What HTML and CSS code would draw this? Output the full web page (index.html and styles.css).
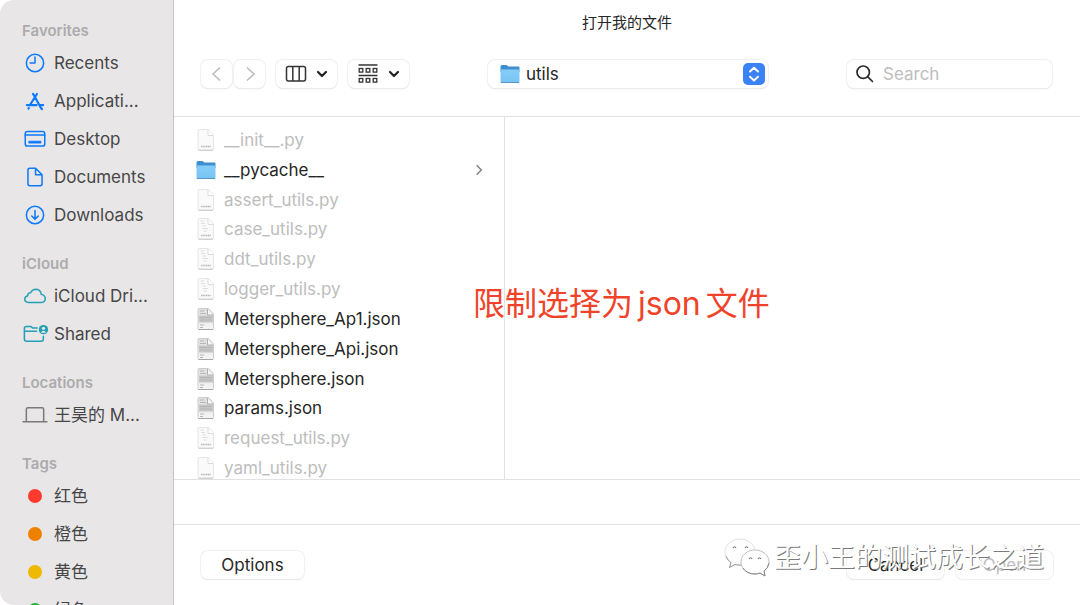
FILE: index.html
```html
<!DOCTYPE html>
<html lang="zh-CN">
<head>
<meta charset="utf-8">
<meta name="viewport" content="width=device-width, initial-scale=1">
<title>打开我的文件</title>
<link rel="stylesheet" href="styles.css">
</head>
<body>
<svg class="defs" aria-hidden="true">
  <linearGradient id="folderFill" x1="0" y1="0" x2="0" y2="1"><stop offset="0" stop-color="#86cdf8"/><stop offset="1" stop-color="#78c4f4"/></linearGradient>
  <linearGradient id="jsonFill" x1="0" y1="0" x2="0" y2="1"><stop offset="0" stop-color="#dedede"/><stop offset="1" stop-color="#f6f6f6"/></linearGradient>
  <symbol id="folder" viewBox="0 0 20 20">
    <path d="M0.5 2.5Q0.5 1 2 1H6.5L8.5 2.500H18.500Q19.500 2.500 19.500 3.500V8H.5Z" fill="#3f8fd0"/>
    <path d="M.5 5.500H19.500V17.500Q19.500 18.500 18.500 18.500H1.500Q.5 18.500 .5 17.500Z" fill="url(#folderFill)"/>
    <path d="M.8 18.500H19.200" stroke="#5599c4" stroke-width="1"/>
  </symbol>
  <symbol id="py" viewBox="0 0 18 22">
    <path d="M1 1.500Q1 .5 2 .5H11.500L16.500 6V20Q16.500 21 15.500 21H2Q1 21 1 20Z" fill="#fafafa" stroke="#e6e6e6"/>
    <path d="M11 .8V6.500H16.500" fill="#fff" stroke="#dcdcdc"/>
    <path d="M1.500 21.300H16" stroke="#c8c8c8"/>
    <path d="M4 17.500H14" stroke="#b4b4b4" stroke-width="1.300" stroke-dasharray="1.200 .5"/>
  </symbol>
  <symbol id="pycode" viewBox="0 0 18 22">
    <use href="#py"/>
    <path d="M3.500 3H7M4 5.500H8M5.500 8H9M5.500 10.500H11M6.500 13H10" stroke="#dedede"/>
  </symbol>
  <symbol id="json" viewBox="0 0 18 22">
    <path d="M1 1.500Q1 .5 2 .5H11.500L16.500 6V20.500Q16.500 21.500 15.500 21.500H2Q1 21.500 1 20.500Z" fill="url(#jsonFill)" stroke="#cdcdcd"/>
    <path d="M2 7.500H16V14.500H2Z" fill="#c6c6c6"/>
    <path d="M3 3H7M3 5.500H9M3 9.500H15M3 12H15M3 17H7M3 19.500H6" stroke="#b6b6b6"/>
    <path d="M10.500 1V7H16" fill="#f7f7f7" stroke="#b0b0b0"/>
    <path d="M1.500 21.500H16" stroke="#a6a6a6"/>
  </symbol>
  <symbol id="chev" viewBox="0 0 12 12"><path d="M2 4L6 8L10 4" fill="none" stroke="#222" stroke-width="2.200" stroke-linecap="round" stroke-linejoin="round"/></symbol>
</svg>

<div class="dialog">
  <nav class="sidebar">
    <section>
      <h2>Favorites</h2>
      <a href="#recents"><svg class="blue" viewBox="0 0 24 24"><circle cx="12" cy="12" r="8"/><path d="M12 6.500V12H7.500"/></svg><span>Recents</span></a>
      <a href="#applications"><svg class="blue thick" viewBox="0 0 24 24"><path d="M10.200 5.500L11.800 8L17.500 18.500L18.500 19.500M13.800 5.500L7.500 15.500M4.500 15.800H13.500M17 15.800H19.500M6.300 18.500L6 19"/></svg><span>Applicati...</span></a>
      <a href="#desktop"><svg class="blue" viewBox="0 0 24 24"><rect x="3" y="5" width="18" height="13.500" rx="2"/><path d="M3 8.300H21"/><rect x="6.500" y="14" width="11" height="1.800" fill="#0a7aff" stroke-width=".6"/></svg><span>Desktop</span></a>
      <a href="#documents"><svg class="blue" viewBox="0 0 24 24"><path d="M12.500 4H7.200Q5.500 4 5.500 5.700V18.300Q5.500 20 7.200 20H16.800Q18.500 20 18.500 18.300V10ZM12.500 4V10H18.500"/></svg><span>Documents</span></a>
      <a href="#downloads"><svg class="blue" viewBox="0 0 24 24"><circle cx="12" cy="12" r="8"/><path d="M12 7.800V15.800M9 13L12 16L15 13"/></svg><span>Downloads</span></a>
    </section>
    <section>
      <h2>iCloud</h2>
      <a href="#drive"><svg class="teal" viewBox="0 0 24 24"><path d="M6 18Q2.500 17.800 2.500 14.800Q2.700 12.300 5.300 11.700Q5.300 8.900 8 9Q9.500 5.800 13 5.800Q17 6 17.800 10.500Q21.500 11.300 21.500 14.500Q21.300 17.700 18 18Z"/></svg><span>iCloud Dri...</span></a>
      <a href="#shared"><svg class="teal" viewBox="0 0 24 24"><path d="M14 6.500H10L8 5H4Q2.200 5 2.200 6.700V16.500Q2.200 18.600 4.300 18.600H17.500Q19.700 18.600 19.700 16.500V14M2.200 9.500H13.500"/><circle cx="19.800" cy="8" r="4.300" fill="#22a0b6" stroke="none"/><circle cx="19.800" cy="6.700" r="1.500" fill="#e8e6e7" stroke="none"/><path d="M17.300 10.800Q19.800 7.300 22.300 10.800" fill="#e8e6e7" stroke="none"/></svg><span>Shared</span></a>
    </section>
    <section>
      <h2>Locations</h2>
      <a href="#mac"><svg class="gray" viewBox="0 0 24 24"><path d="M4 17.500V6.700Q4 5.200 5.500 5.200H18.500Q20 5.200 20 6.700V17.500M1 18.200H23"/></svg><span>王昊的 M...</span></a>
    </section>
    <section>
      <h2>Tags</h2>
      <a href="#red"><i class="dot red"></i><span>红色</span></a>
      <a href="#orange"><i class="dot orange"></i><span>橙色</span></a>
      <a href="#yellow"><i class="dot yellow"></i><span>黄色</span></a>
      <a href="#green"><i class="dot green"></i><span>绿色</span></a>
    </section>
  </nav>

  <main class="main">
    <h1>打开我的文件</h1>
    <div class="toolbar">
      <div class="tools">
        <div class="nav-pair">
          <button class="ctl nav" aria-label="Back" disabled><svg width="16" height="18" viewBox="0 0 16 18"><path d="M11 2.500L4 9L11 15.500"/></svg></button>
          <button class="ctl nav" aria-label="Forward" disabled><svg width="16" height="18" viewBox="0 0 16 18"><path d="M5 2.500L12 9L5 15.500"/></svg></button>
        </div>
        <button class="ctl view" aria-label="Column view"><svg width="22" height="20" viewBox="0 0 22 20" fill="none" stroke="#333" stroke-width="1.500"><rect x="1.500" y="2.500" width="19" height="14.500" rx="2"/><path d="M7.800 2.500V17M14.200 2.500V17"/></svg><svg width="12" height="12"><use href="#chev"/></svg></button>
        <button class="ctl view" aria-label="Group items"><svg width="22" height="20" viewBox="0 0 22 20" fill="none" stroke="#333" stroke-width="1.300"><path d="M1.500 1H20.500M1.500 11.500H20.500"/><rect x="2.200" y="4.500" width="3.600" height="3.600"/><rect x="9.200" y="4.500" width="3.600" height="3.600"/><rect x="16.200" y="4.500" width="3.600" height="3.600"/><rect x="2.200" y="14.500" width="3.600" height="3.600"/><rect x="9.200" y="14.500" width="3.600" height="3.600"/><rect x="16.200" y="14.500" width="3.600" height="3.600"/></svg><svg width="12" height="12"><use href="#chev"/></svg></button>
      </div>
      <div class="picker">
        <select class="ctl" aria-label="Folder"><option>utils</option></select>
        <svg class="picker-folder" width="20" height="20"><use href="#folder"/></svg>
        <svg class="picker-arrows" width="22" height="22" viewBox="0 0 22 22"><rect width="22" height="22" rx="5" fill="#3b82f6"/><path d="M7 8.500L11 4.800L15 8.500M7 13.800L11 17.500L15 13.800" fill="none" stroke="#fff" stroke-width="2" stroke-linecap="round" stroke-linejoin="round"/></svg>
      </div>
      <div class="search">
        <input class="ctl" type="search" placeholder="Search" aria-label="Search">
        <svg width="20" height="20" viewBox="0 0 20 20" fill="none" stroke="#2c2c2c" stroke-width="1.700" stroke-linecap="round"><circle cx="8.200" cy="8.200" r="6.200"/><path d="M12.800 12.800L17.500 17.500"/></svg>
      </div>
    </div>

    <div class="columns">
      <div class="column">
        <ul class="files">
          <li><button disabled><svg><use href="#py"/></svg>__init__.py</button></li>
          <li><button><svg><use href="#folder"/></svg>__pycache__<svg class="more" viewBox="0 0 12 12"><path d="M4 2L8 6L4 10" fill="none" stroke="#858585" stroke-width="1.300"/></svg></button></li>
          <li><button disabled><svg><use href="#py"/></svg>assert_utils.py</button></li>
          <li><button disabled><svg><use href="#pycode"/></svg>case_utils.py</button></li>
          <li><button disabled><svg><use href="#pycode"/></svg>ddt_utils.py</button></li>
          <li><button disabled><svg><use href="#pycode"/></svg>logger_utils.py</button></li>
          <li><button><svg><use href="#json"/></svg>Metersphere_Ap1.json</button></li>
          <li><button><svg><use href="#json"/></svg>Metersphere_Api.json</button></li>
          <li><button><svg><use href="#json"/></svg>Metersphere.json</button></li>
          <li><button><svg><use href="#json"/></svg>params.json</button></li>
          <li><button disabled><svg><use href="#pycode"/></svg>request_utils.py</button></li>
          <li><button disabled><svg><use href="#py"/></svg>yaml_utils.py</button></li>
        </ul>
      </div>
      <div class="preview"></div>
      <p class="note"><span>限制选择为</span><span>json</span><span>文件</span></p>
    </div>
    <div class="strip"></div>
    <footer class="footer">
      <button class="ctl options">Options</button>
      <div class="actions">
        <button class="ctl">Cancel</button>
        <button class="ctl" disabled>Open</button>
      </div>
      <div class="watermark">
        <svg width="46" height="40" viewBox="0 0 46 40" fill="#fff" stroke-width=".9">
          <path d="M16 1C7.500 1 1 6.800 1 14C1 18.300 3.300 22 7 24.500L5.500 29.500L11 26.500Q18 28 22 26C31 22 32 14 31 11C29 5 23 1 16 1Z" stroke="#dedede"/>
          <path d="M2 18Q3.500 22.500 7 24.500L5.500 29.500L11 26.500Q14 27.500 17 27" fill="none" stroke="#909090"/>
          <path d="M31 12C23 12 17 17.500 17 24C17 31 23 36 31 36Q34 36 36 35L41 38L40 33C43 31 45 28 45 24C45 17.500 39 12 31 12Z" stroke="#b8b8b8"/>
          <path d="M19 30Q23 36 31 36Q34 36 36 35L41 38L40 33Q44 30 45 25" fill="none" stroke="#808080"/>
          <g fill="none" stroke="#777" stroke-width="1.200"><path d="M9 10Q10.500 7.500 12 10M21 10Q22.500 7.500 24 10M25 21Q26.500 18.500 28 21M34 21Q35.500 18.500 37 21"/></g>
        </svg>
        <span>歪小王的测试成长之道</span>
      </div>
    </footer>
  </main>
</div>
</body>
</html>
```
FILE: styles.css
```css
* { box-sizing: border-box; }
body {
  margin: 0;
  background: #fff;
  color: #262626;
  font: 17px/24px Inter, "Noto Sans CJK SC", sans-serif;
}
button, input, select { font: inherit; color: inherit; }
h1, h2, p, ul { margin: 0; padding: 0; }
.defs { position: absolute; width: 0; height: 0; }

.dialog { display: flex; height: 100vh; overflow: hidden; }

.sidebar {
  flex: 0 0 174px;
  display: flex;
  flex-direction: column;
  gap: 17px;
  padding: 18px 22px 0;
  overflow: hidden;
  background: #e8e6e7;
  border-right: 1px solid #c4c3c4;
  border-radius: 14px 0 0 14px;
}
.sidebar h2 { font-size: 15px; font-weight: 600; line-height: 26px; color: #adabac; }
.sidebar a {
  display: flex;
  align-items: center;
  gap: 6px;
  height: 38px;
  color: #474647;
  text-decoration: none;
  white-space: nowrap;
}
.sidebar svg { flex: none; width: 26px; height: 26px; fill: none; stroke-width: 1.400; stroke-linejoin: round; stroke-linecap: round; overflow: visible; }
.sidebar .blue { stroke: #0a7aff; }
.sidebar .thick { stroke-width: 2; }
.sidebar .teal { stroke: #22a0b6; }
.sidebar .gray { stroke: #7b797a; }
.dot { flex: none; width: 14px; height: 14px; margin: 0 6px; border-radius: 50%; }
.red { background: #ff3b30; }
.orange { background: #ee8200; }
.yellow { background: #eeb900; }
.green { background: #1fb92f; }

.main { flex: 1; min-width: 0; display: flex; flex-direction: column; }
.main h1 { padding-top: 11px; font-size: 15px; font-weight: 400; line-height: 24px; text-align: center; }
.ctl {
  height: 28px;
  padding: 0;
  border: 0;
  border-radius: 7px;
  background: #fff;
  box-shadow: 0 0 1px 1px #f0f0f0, 0 1px 1px 0 #c8c8c8;
}
.toolbar {
  display: flex;
  justify-content: space-between;
  align-items: center;
  padding: 25px 28px 28px 27px;
  border-bottom: 1px solid #e2e2e2;
}
.tools { display: flex; gap: 11px; }
.nav-pair { display: flex; gap: 2px; }
.nav { width: 31px; display: grid; place-items: center; }
.nav svg { fill: none; stroke: #b9b9b9; stroke-width: 1.500; }
.view { width: 61px; display: flex; align-items: center; justify-content: center; gap: 9px; }
.picker { position: relative; width: 280px; }
.picker select { width: 100%; padding: 0 38px; appearance: none; }
.picker-folder { position: absolute; left: 12px; top: 4px; pointer-events: none; }
.picker-arrows { position: absolute; right: 3px; top: 3px; pointer-events: none; }
.search { position: relative; width: 205px; }
.search input { width: 100%; padding: 0 8px 0 36px; appearance: none; outline-offset: 2px; }
.search input::placeholder { color: #bdbdbd; }
.search svg { position: absolute; left: 8px; top: 4px; }

.columns { position: relative; flex: 1; min-height: 0; display: flex; overflow: hidden; }
.column { flex: 0 0 331px; display: flex; border-right: 1px solid #e2e2e2; }
.preview { flex: 1; }
.files {
  flex: 1;
  display: grid;
  grid-auto-rows: 1fr;
  margin-bottom: -4px;
  padding: 8px 18px 0 22px;
  list-style: none;
}
.files li { display: flex; min-height: 0; }
.files button {
  flex: 1;
  display: flex;
  align-items: center;
  gap: 8px;
  padding: 0;
  border: 0;
  background: none;
  text-align: left;
}
.files button:disabled { color: #bdbdbd; }
.files svg { flex: none; width: 20px; height: 22px; }
.files .more { width: 14px; height: 14px; margin-left: auto; }
.note {
  position: absolute;
  left: 299px;
  top: 163px;
  display: flex;
  gap: 5px;
  font-size: 32px;
  line-height: 48px;
  color: #f0432a;
  white-space: nowrap;
}
.strip { height: 46px; border: solid #e2e2e2; border-width: 1px 0; }

.footer {
  position: relative;
  display: flex;
  justify-content: space-between;
  padding: 26px 27px;
}
.options { width: 103px; }
.actions { display: flex; gap: 12px; }
.actions .ctl { width: 97px; }
.actions .ctl:disabled { color: #bdbdbd; box-shadow: 0 0 1px 1px #f0f0f0; }
.watermark {
  position: absolute;
  right: 36px;
  top: 13px;
  display: flex;
  align-items: center;
  gap: 4px;
  color: #fff;
  font-size: 27px;
  line-height: 40px;
  text-shadow: 1px 1px 0 #7a7a7a;
  white-space: nowrap;
  pointer-events: none;
}
```
